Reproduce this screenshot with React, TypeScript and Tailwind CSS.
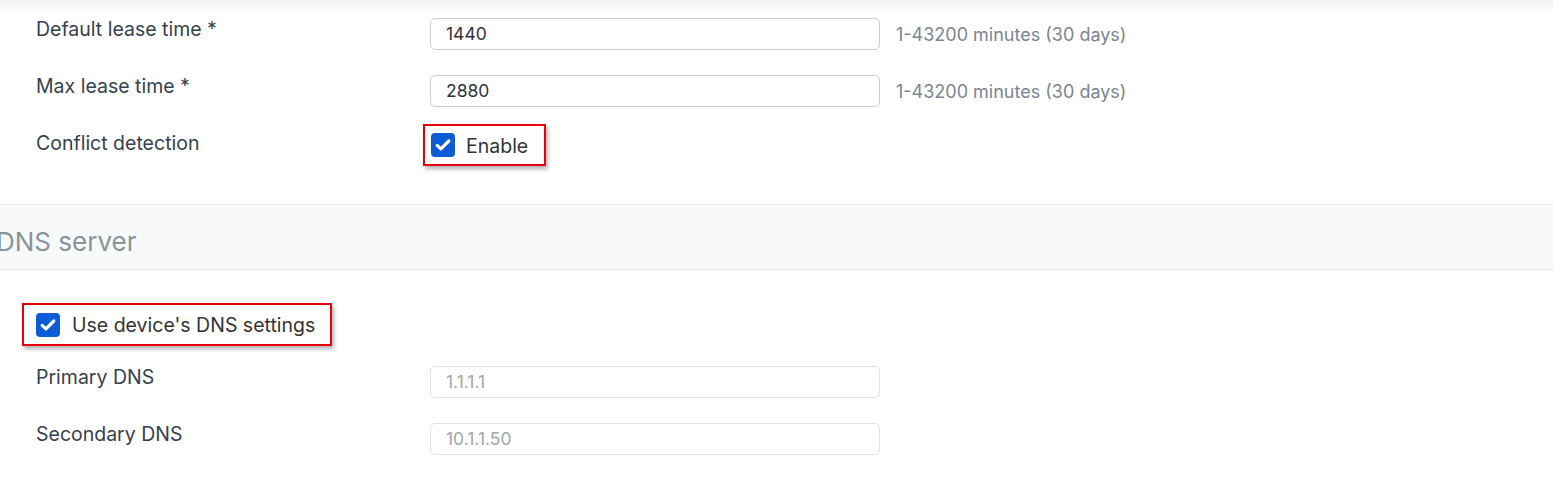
import React from "react";

const Check = () => (
  <span className="flex h-[24px] w-[24px] shrink-0 items-center justify-center rounded-[4px] bg-[#0b5cd5]">
    <svg width="18" height="18" viewBox="0 0 18 18" fill="none">
      <path d="M3.2 9.4l3.7 3.5L14.8 5" stroke="#fff" strokeWidth="3.2" strokeLinecap="round" strokeLinejoin="round" />
    </svg>
  </span>
);

const Field = ({ label, value, hint, disabled }: { label: string; value: string; hint?: string; disabled?: boolean }) => (
  <div className="flex items-start">
    <div className="w-[430px] shrink-0 pl-[36px] pt-[1px] text-[19.5px] leading-[20px] text-[#35414d]">{label}</div>
    <div
      className={`flex h-[32px] w-[450px] items-center rounded-[5px] border px-[15px] text-[17.5px] ${
        disabled ? "border-[#dfe1e3] text-[#a2a7ac]" : "border-[#c9ced3] text-[#2f3338]"
      }`}
    >
      {value}
    </div>
    {hint && <div className="ml-[16px] self-center text-[18px] text-[#7c858e]">{hint}</div>}
  </div>
);

export default function App() {
  return (
    <div className="min-h-[498px] w-full overflow-hidden bg-white font-['Inter',sans-serif]">
      <div className="h-[12px] bg-gradient-to-b from-[#f1f2f3] to-white" />
      <div className="pt-[6px]">
        <Field label="Default lease time *" value="1440" hint="1-43200 minutes (30 days)" />
        <div className="mt-[25px]">
          <Field label="Max lease time *" value="2880" hint="1-43200 minutes (30 days)" />
        </div>
        <div className="mt-[17px] flex items-start">
          <div className="w-[430px] shrink-0 pl-[36px] pt-[9px] text-[19.5px] leading-[20px] text-[#35414d]">Conflict detection</div>
          <div className="ml-[-7px] flex h-[42px] items-center gap-[11px] border-2 border-[#e8000b] pl-[6px] pr-[16px] shadow-[2px_3px_4px_rgba(0,0,0,0.3)]">
            <Check />
            <span className="pt-[3px] text-[19.5px] text-[#333]">Enable</span>
          </div>
        </div>
      </div>

      <div className="mt-[38px] flex h-[66px] items-center border-y border-[#e3e5e7] bg-[#f8f9f9] pt-[8px]">
        <h2 className="ml-[-4px] text-[26px] font-normal text-[#8a939c]">DNS server</h2>
      </div>

      <div className="ml-[22px] mt-[33px] flex h-[43px] w-[310px] items-center gap-[12px] border-2 border-[#e8000b] pl-[12px] shadow-[2px_3px_4px_rgba(0,0,0,0.3)]">
        <Check />
        <span className="pt-[3px] text-[19.5px] text-[#333]">Use device's DNS settings</span>
      </div>

      <div className="mt-[20px]">
        <Field label="Primary DNS" value="1.1.1.1" disabled />
        <div className="mt-[25px]">
          <Field label="Secondary DNS" value="10.1.1.50" disabled />
        </div>
      </div>
    </div>
  );
}
